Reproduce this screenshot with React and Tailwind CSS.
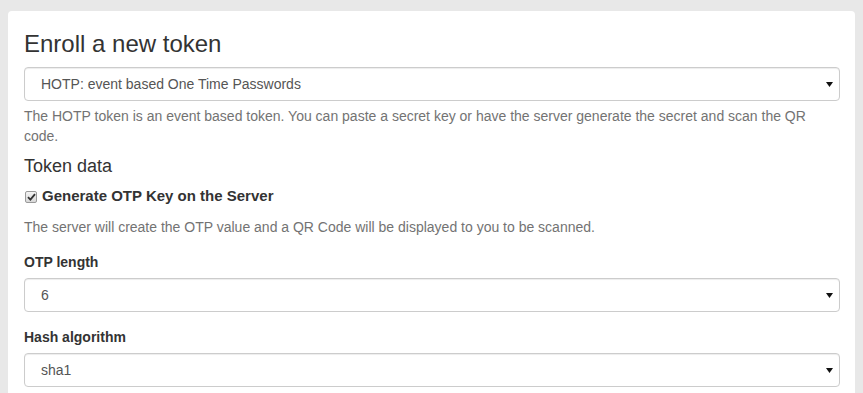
import React from "react";

function FakeSelect({ value }) {
  return (
    <div className="h-[34px] w-full flex items-center justify-between rounded-[4px] border border-[#cccccc] bg-white pl-[16px] pr-[6px] text-[14px] text-[#555555] shadow-[inset_0_1px_1px_rgba(0,0,0,0.075)]">
      <span>{value}</span>
      <svg width="7" height="5" viewBox="0 0 7 5" className="mt-px">
        <path d="M0 0 L7 0 L3.5 5 Z" fill="#111111" />
      </svg>
    </div>
  );
}

function CheckBox() {
  return (
    <span className="inline-flex h-[12px] w-[12px] items-center justify-center rounded-[2px] border border-[#9a9a9a] bg-gradient-to-b from-[#f4f4f4] to-[#d8d8d8]">
      <svg width="9" height="8" viewBox="0 0 9 8">
        <path d="M1 4.2 L3.4 6.6 L8 1.2" fill="none" stroke="#333333" strokeWidth="1.8" />
      </svg>
    </span>
  );
}

export default function App() {
  return (
    <div className="min-h-[393px] w-full overflow-hidden bg-[#e8e8e8] pt-[11px] pl-[8px] pr-[8px] font-['Liberation_Sans',Arial,sans-serif] text-[14px] leading-[20px] text-[#333333]">
      <div className="rounded-t-[4px] bg-white pl-[16px] pr-[15px] pt-[20px] pb-[20px]">
        <h3 className="mb-[10px] text-[24px] leading-[26px]">Enroll a new token</h3>
        <FakeSelect value="HOTP: event based One Time Passwords" />
        <p className="mt-[5px] text-[#737373]">
          The HOTP token is an event based token. You can paste a secret key or have the server generate the secret and scan the QR code.
        </p>
        <h4 className="mt-[10px] mb-[10px] text-[18px] leading-[20px]">Token data</h4>
        <label className="flex items-center gap-[5px] text-[15px] font-bold">
          <span className="pl-[1px]">
            <CheckBox />
          </span>
          <span>Generate OTP Key on the Server</span>
        </label>
        <p className="mt-[11px] mb-[15px] text-[#737373]">
          The server will create the OTP value and a QR Code will be displayed to you to be scanned.
        </p>
        <div className="mb-[15px]">
          <div className="mb-[6px] font-bold">OTP length</div>
          <FakeSelect value="6" />
        </div>
        <div>
          <div className="mb-[6px] font-bold">Hash algorithm</div>
          <FakeSelect value="sha1" />
        </div>
      </div>
    </div>
  );
}
